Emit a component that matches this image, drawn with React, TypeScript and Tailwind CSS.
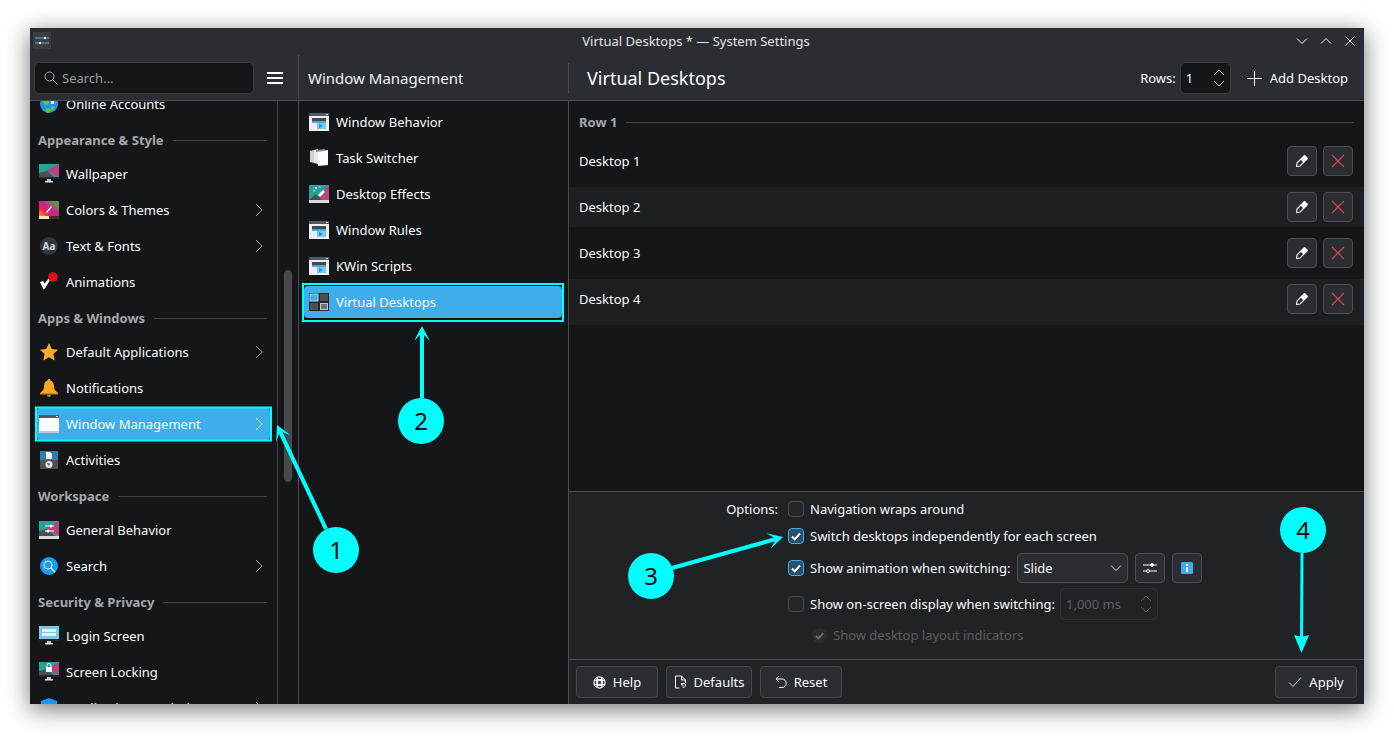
import React from "react";

const T = ({ children, className = "" }: { children: React.ReactNode; className?: string }) => (
  <span className={`whitespace-nowrap pt-[2px] ${className}`}>{children}</span>
);

const Chev = ({ c = "#9a9da0" }: { c?: string }) => (
  <svg width="10" height="14" viewBox="0 0 10 14" fill="none" stroke={c} strokeWidth="1"><path d="M2 1l6 6-6 6" /></svg>
);

const WinIcon = () => (
  <svg width="20" height="18" viewBox="0 0 20 18">
    <rect width="20" height="18" fill="#eff0f1" />
    <rect width="20" height="3" fill="#4d5a68" />
    <rect x="17" y="1" width="2" height="1" fill="#eff0f1" />
    <rect x="3" y="5" width="14" height="3" fill="#3f4a56" />
    <rect x="3" y="8" width="14" height="2" fill="#3daee9" />
    <rect x="8" y="10" width="9" height="6" fill="#7fc8ee" />
    <path d="M10 11l4 2-4 2z" fill="#1d8fd0" />
  </svg>
);
const TaskIcon = () => (
  <svg width="20" height="20" viewBox="0 0 20 20">
    <path d="M1 3l4-1v13l-4-1z" fill="#cfd2d4" />
    <path d="M5 2l4-1v15l-4-1z" fill="#e6e8e9" />
    <path d="M9 3l10-1v15l-10 1z" fill="#fcfcfc" />
    <path d="M7 2l9-1v2l-9 1z" fill="#8d9296" />
  </svg>
);
const EffectsIcon = () => (
  <svg width="20" height="18" viewBox="0 0 20 18">
    <rect width="20" height="16" fill="#2aa198" />
    <path d="M20 0v15H6z" fill="#b8437f" />
    <path d="M0 15l7-6 6 6z" fill="#4a5056" />
    <rect y="15" width="20" height="3" fill="#d9dcde" />
    <path d="M9 10l5-5 2 2-5 5z" fill="#fcfcfc" />
    <circle cx="7" cy="3" r="1" fill="#fcfcfc" /><circle cx="11" cy="2" r=".7" fill="#fcfcfc" /><circle cx="5" cy="6" r=".7" fill="#fcfcfc" />
  </svg>
);
const VDIcon = () => (
  <svg width="20" height="18" viewBox="0 0 20 18">
    <rect width="20" height="18" fill="#232629" />
    <rect x="1" y="1" width="8" height="7" fill="#3daee9" stroke="#a9d8f2" />
    <rect x="11" y="1" width="8" height="7" fill="#4d5054" />
    <rect x="1" y="10" width="8" height="7" fill="#4d5054" />
    <rect x="11.500" y="10.500" width="7" height="6" fill="#6d7175" stroke="#c4c7c9" />
  </svg>
);
const Monitor = ({ children }: { children?: React.ReactNode }) => (
  <svg width="20" height="20" viewBox="0 0 20 20">
    <rect width="20" height="15" fill="#232629" />
    <rect x="0" y="0" width="20" height="13" fill="#2aa198" />
    <path d="M20 0v13L7 7z" fill="#b8437f" />
    <path d="M0 13l0-4 8-2 7 6z" fill="#4a5056" />
    <rect x="8" y="15" width="4" height="2" fill="#bfc2c4" />
    <rect x="6" y="17" width="8" height="1.500" fill="#e0e2e3" />
    {children}
  </svg>
);
const ColorsIcon = () => (
  <svg width="20" height="18" viewBox="0 0 20 18">
    <defs>
      <linearGradient id="cg" x1="0" y1="1" x2="1" y2="0">
        <stop offset="0" stopColor="#f59e0b" /><stop offset=".3" stopColor="#e8205a" /><stop offset=".55" stopColor="#c026a0" /><stop offset=".8" stopColor="#7a8f2a" /><stop offset="1" stopColor="#1e8fd0" />
      </linearGradient>
    </defs>
    <rect width="20" height="15" fill="url(#cg)" />
    <rect y="15" width="10" height="3" fill="#fbe3c0" />
    <rect x="10" y="15" width="10" height="3" fill="#3a3426" />
    <path d="M7 11l5-6 1 1-5 6z" fill="#fcfcfc" />
  </svg>
);
const AaIcon = () => (
  <span className="flex h-[18px] w-[18px] items-center justify-center rounded-full bg-[#34373a] text-[10px] font-bold text-[#d5d7d9]">Aa</span>
);
const AnimIcon = () => (
  <svg width="20" height="20" viewBox="0 0 20 20">
    <path d="M1 10l3-1 1.500 2.500 5-6 1.500 1-6 10-1.500 1z" fill="#fcfcfc" />
    <circle cx="14" cy="5" r="4.800" fill="#e0101c" />
  </svg>
);
const StarIcon = () => (
  <svg width="20" height="20" viewBox="0 0 20 20"><path d="M10 1l2.800 6 6.200.700-4.600 4.300 1.300 6.500L10 15.200 4.300 18.500l1.300-6.500L1 7.700 7.200 7z" fill="#fbab2e" /></svg>
);
const BellIcon = () => (
  <svg width="20" height="20" viewBox="0 0 20 20">
    <path d="M10 1c1 0 1.500.700 1.500 1.500C14.500 3.500 15 6 15 9c0 3 2 4.500 4 6H1c2-1.500 4-3 4-6 0-3 .500-5.500 3.500-6.500C8.500 1.700 9 1 10 1z" fill="#f9a825" />
    <rect x="1" y="15" width="18" height="1.500" fill="#d97f14" />
    <path d="M8 17h4a2 2 0 0 1-4 0z" fill="#8d9296" />
  </svg>
);
const ActivitiesIcon = () => (
  <svg width="18" height="18" viewBox="0 0 18 18">
    <rect width="18" height="9" fill="#2c7fb0" />
    <rect y="9" width="18" height="9" fill="#4d5054" />
    <path d="M6 1h4l2 2v5H6z" fill="#fcfcfc" />
    <circle cx="9" cy="13.500" r="3.500" fill="#e4e6e7" />
    <path d="M7 12l3 .500-1 2.500z" fill="#4d5054" />
  </svg>
);
const GeneralIcon = () => (
  <svg width="20" height="18" viewBox="0 0 20 18">
    <rect width="20" height="15" fill="#2aa198" />
    <path d="M20 0v15L6 7z" fill="#b8437f" />
    <path d="M0 15V10l8-2 8 7z" fill="#4a5056" />
    <rect y="15" width="20" height="3" fill="#d9dcde" />
    <path d="M6 5h9M6 10h9" stroke="#fcfcfc" />
    <circle cx="12" cy="5" r="1.500" fill="#fcfcfc" /><circle cx="9" cy="10" r="1.500" fill="#fcfcfc" />
  </svg>
);
const SearchIcon = () => (
  <svg width="18" height="18" viewBox="0 0 18 18" fill="none">
    <circle cx="9" cy="9" r="9" fill="#1a9bf0" />
    <circle cx="8" cy="8" r="4" stroke="#e8f5fe" />
    <path d="M11 11l4 4" stroke="#e8f5fe" strokeWidth="1.300" />
  </svg>
);
const LoginIcon = () => (
  <svg width="20" height="20" viewBox="0 0 20 20">
    <rect width="20" height="15" fill="#232629" />
    <rect y="0" width="20" height="13" fill="#7fc4ea" />
    <rect x="3" y="3" width="14" height="3" fill="#e6eef3" />
    <rect x="3" y="7" width="14" height="3" fill="#e6eef3" />
    <rect x="8" y="15" width="4" height="2" fill="#bfc2c4" />
    <rect x="6" y="17" width="8" height="1.500" fill="#e0e2e3" />
  </svg>
);
const Globe = () => (
  <svg width="18" height="18" viewBox="0 0 18 18">
    <circle cx="9" cy="9" r="9" fill="#2196e0" />
    <path d="M3 7c2-2 4-2 6-1 1 2-1 4-3 4-1 0-2-1-3-3zM11 12c2-1 3-1 4 0-1 2-2 3-4 4zM5 14c2-1 4-1 6 1-1 2-3 3-4 3z" fill="#6cc04a" />
    <path d="M11 6h3v3h-3z" fill="#e8f5fe" />
  </svg>
);
const Shield = () => (
  <svg width="18" height="20" viewBox="0 0 18 20"><path d="M9 0l8 3v6c0 5-4 9-8 11-4-2-8-6-8-11V3z" fill="#1a9bf0" /></svg>
);

const Item = ({ icon, label, chev }: { icon: React.ReactNode; label: string; chev?: boolean }) => (
  <div className="flex h-[36px] items-center pr-[13px] pl-[9px]">
    <span className="flex w-[20px] shrink-0 items-center justify-center">{icon}</span>
    <T className="ml-[7px] flex-1">{label}</T>
    {chev && <Chev />}
  </div>
);
const Section = ({ label }: { label: string }) => (
  <div className="flex h-[34px] items-center gap-[9px] pt-[2px] pr-[10px] pl-[8px]">
    <T className="font-bold text-[#a5a8ab]">{label}</T>
    <span className="h-px flex-1 bg-[#3f4245]" />
  </div>
);
const Mid = ({ icon, label, active }: { icon: React.ReactNode; label: string; active?: boolean }) => (
  <div className={active ? "-mx-[5px] my-[2px] flex h-[32px] items-center rounded-[4px] bg-[#3daee9] pl-[5px]" : "flex h-[36px] items-center"}>
    <span className="flex w-[20px] shrink-0 items-center justify-center">{icon}</span>
    <T className="ml-[7px]">{label}</T>
  </div>
);

const IconBtn = ({ children, w = "w-[30px]" }: { children: React.ReactNode; w?: string }) => (
  <div className={`flex h-[30px] ${w} items-center justify-center rounded-[4px] border border-[#4a4d51] bg-[#2a2d31]`}>{children}</div>
);

const Pencil = () => (
  <svg width="14" height="14" viewBox="0 0 14 14">
    <path d="M9.500 1.500l3 3-7.500 7.500-3.500.500.500-3.500z" fill="#2a2d31" stroke="#fcfcfc" strokeWidth="1.100" strokeLinejoin="round" />
    <path d="M9.500 1.500l3 3-4 4-3-3z" fill="#fcfcfc" />
  </svg>
);
const RedX = () => (
  <svg width="14" height="14" viewBox="0 0 14 14" fill="none" stroke="#da4453" strokeWidth="1.200"><path d="M1 1l12 12M13 1L1 13" /></svg>
);

const DesktopRow = ({ name, band }: { name: string; band?: "short" | "full" }) => (
  <div className={`h-[46px] ${band === "full" ? "bg-[#1c1f22]" : ""}`}>
    <div className={`flex h-[40px] items-center pr-[11px] pl-[10px] ${band === "short" ? "bg-[#1c1f22]" : ""}`}>
      <T className="flex-1">{name}</T>
      <div className="flex gap-[6px]">
        <IconBtn><Pencil /></IconBtn>
        <IconBtn><RedX /></IconBtn>
      </div>
    </div>
  </div>
);

const Check = ({ on }: { on?: boolean }) => (
  <span className={`flex h-[16px] w-[16px] shrink-0 items-center justify-center rounded-[4px] border ${on ? "border-[#3daee9] bg-[#2b5068]" : "border-[#4a4d51] bg-[#232629]"}`}>
    {on && (
      <svg width="12" height="12" viewBox="0 0 12 12" fill="none" stroke="#fcfcfc" strokeWidth="2"><path d="M2 6.500l2.800 2.800L10 3.500" /></svg>
    )}
  </span>
);

const Spin = ({ c = "#c8cacc" }: { c?: string }) => (
  <svg width="12" height="18" viewBox="0 0 12 18" fill="none" stroke={c} strokeWidth="1"><path d="M1 6l5-5 5 5M1 12l5 5 5-5" /></svg>
);

const FootBtn = ({ icon, label, w }: { icon: React.ReactNode; label: string; w: string }) => (
  <div className={`flex h-[32px] ${w} items-center justify-center gap-[7px] rounded-[4px] border border-[#45484c] bg-[#2a2d31]`}>
    {icon}
    <T>{label}</T>
  </div>
);

const Arrow = ({ x1, y1, x2, y2, sw = 4, L = 15, W = 8, N = 7 }: { x1: number; y1: number; x2: number; y2: number; sw?: number; L?: number; W?: number; N?: number }) => {
  const a = Math.atan2(y2 - y1, x2 - x1);
  const ux = Math.cos(a), uy = Math.sin(a), px = -uy, py = ux;
  const b = [x2 - ux * L, y2 - uy * L];
  const n = [x2 - ux * N, y2 - uy * N];
  const pts = [[x2, y2], [b[0] + px * W, b[1] + py * W], n, [b[0] - px * W, b[1] - py * W]].map((p) => p.join(",")).join(" ");
  return (
    <g>
      <line x1={x1} y1={y1} x2={n[0]} y2={n[1]} stroke="#00ffff" strokeWidth={sw} />
      <polygon points={pts} fill="#00ffff" />
    </g>
  );
};
const Badge = ({ x, y, n }: { x: number; y: number; n: string }) => (
  <g>
    <circle cx={x} cy={y} r="23" fill="#00ffff" />
    <text x={x} y={y + 9} textAnchor="middle" fontSize="24" fill="#0a0a0a" fontFamily="'Noto Sans', sans-serif">{n}</text>
  </g>
);

export default function App() {
  return (
    <div className="relative h-[736px] w-[1394px] overflow-hidden bg-white pt-[28px] pl-[30px] font-['Noto_Sans',sans-serif] text-[13px] text-[#fcfcfc]">
      <div className="flex h-[676px] w-[1334px] flex-col overflow-hidden bg-[#141618] shadow-[0_5px_22px_rgba(0,0,0,0.55)]">
        {/* Title bar */}
        <div className="relative flex h-[27px] shrink-0 items-center justify-center bg-[#2a2e32]">
          <div className="absolute top-[4px] left-[3px] flex h-[17px] w-[18px] flex-col justify-center gap-[2px] bg-[#3a3e42] px-[2px]">
            <svg width="14" height="10" viewBox="0 0 14 10" fill="none"><path d="M0 2h14" stroke="#3daee9" /><path d="M0 7h14" stroke="#8fa3b0" /><circle cx="10" cy="2" r="1.200" fill="#fcfcfc" /><circle cx="5" cy="7" r="1.200" fill="#fcfcfc" /></svg>
          </div>
          <span className="-ml-[2px] text-[#e4e5e6]">Virtual Desktops * — System Settings</span>
          <div className="absolute top-[7px] right-[8px] flex gap-[12px]">
            <svg width="12" height="12" viewBox="0 0 12 12" fill="none" stroke="#fcfcfc"><path d="M1 3.500l5 5 5-5" /></svg>
            <svg width="12" height="12" viewBox="0 0 12 12" fill="none" stroke="#fcfcfc"><path d="M1 8.500l5-5 5 5" /></svg>
            <svg width="12" height="12" viewBox="0 0 12 12" fill="none" stroke="#fcfcfc"><path d="M1.500 1.500l9 9M10.500 1.500l-9 9" /></svg>
          </div>
        </div>
        {/* Header */}
        <div className="flex h-[46px] shrink-0 border-b border-[#4a4d51] bg-[#2a2e32]">
          <div className="flex w-[269px] shrink-0 items-center border-r border-[#4a4d51] pt-[1px] pl-[4px]">
            <div className="flex h-[32px] w-[220px] items-center gap-[4px] rounded-[5px] border border-[#3a3d41] bg-[#141618] pl-[9px] text-[#9a9da0]">
              <svg width="14" height="14" viewBox="0 0 14 14" fill="none" stroke="#a4a7aa"><circle cx="5.500" cy="5.500" r="4.500" /><path d="M9 9l4.500 4.500" /></svg>
              <T>Search...</T>
            </div>
            <svg className="ml-[13px]" width="16" height="12" viewBox="0 0 16 12" fill="#fcfcfc"><rect width="16" height="2" /><rect y="5" width="16" height="2" /><rect y="10" width="16" height="2" /></svg>
          </div>
          <div className="flex w-[270px] shrink-0 items-center pt-[1px] pl-[9px] text-[15px] text-[#f0f1f2]">
            <span className="flex-1">Window Management</span>
            <span className="h-[30px] w-px bg-[#4a4d51]" />
          </div>
          <div className="flex flex-1 items-center pt-[1px] pr-[16px] pl-[18px]">
            <span className="flex-1 text-[18px]">Virtual Desktops</span>
            <T>Rows:</T>
            <div className="mr-[16px] ml-[4px] flex h-[32px] w-[51px] items-center justify-between rounded-[5px] border border-[#3a3d41] bg-[#141618] pr-[5px] pl-[5px]">
              <T>1</T>
              <Spin />
            </div>
            <svg width="15" height="15" viewBox="0 0 15 15" stroke="#fcfcfc"><path d="M7.500 0v15M0 7.500h15" /></svg>
            <T className="ml-[8px]">Add Desktop</T>
          </div>
        </div>
        {/* Body */}
        <div className="flex min-h-0 flex-1">
          {/* Sidebar */}
          <div className="flex w-[269px] shrink-0 border-r border-[#4a4d51]">
            <div className="w-[248px] shrink-0 overflow-hidden border-r border-[#3f4245]">
              <div className="-mt-[15px]">
                <Item icon={<Globe />} label="Online Accounts" />
                <Section label="Appearance & Style" />
                <Item icon={<Monitor />} label="Wallpaper" />
                <Item icon={<ColorsIcon />} label="Colors & Themes" chev />
                <Item icon={<AaIcon />} label="Text & Fonts" chev />
                <Item icon={<AnimIcon />} label="Animations" />
                <Section label="Apps & Windows" />
                <Item icon={<StarIcon />} label="Default Applications" chev />
                <Item icon={<BellIcon />} label="Notifications" />
                <div className="py-[2px]">
                  <div className="mx-[7px] flex h-[32px] items-center rounded-[3px] bg-[#3daee9] pr-[6px] pl-[2px]">
                    <svg width="20" height="18" viewBox="0 0 20 18"><rect width="20" height="18" fill="#fcfcfc" /><rect width="20" height="3" fill="#4d5a68" /><rect x="17" y="1" width="2" height="1" fill="#fcfcfc" /><rect y="16" width="20" height="2" fill="#c8cbcd" /></svg>
                    <T className="ml-[7px] flex-1">Window Management</T>
                    <Chev c="#d8eefa" />
                  </div>
                </div>
                <Item icon={<ActivitiesIcon />} label="Activities" />
                <Section label="Workspace" />
                <Item icon={<GeneralIcon />} label="General Behavior" />
                <Item icon={<SearchIcon />} label="Search" chev />
                <Section label="Security & Privacy" />
                <Item icon={<LoginIcon />} label="Login Screen" />
                <Item
                  icon={
                    <Monitor>
                      <rect x="7" y="5" width="6" height="5" fill="#fcfcfc" />
                      <path d="M8 5V3.500a2 2 0 0 1 4 0V5" fill="none" stroke="#fcfcfc" />
                    </Monitor>
                  }
                  label="Screen Locking"
                />
                <Item icon={<Shield />} label="Application Permissions" chev />
              </div>
            </div>
            <div className="flex-1 pt-[169px] pl-[6px]">
              <div className="h-[212px] w-[8px] rounded-full border border-[#4e5154] bg-[#47494c]" />
            </div>
          </div>
          {/* Middle */}
          <div className="w-[270px] shrink-0 border-r border-[#4a4d51] pt-[3px] pl-[10px]">
            <div className="w-[248px]">
              <Mid icon={<WinIcon />} label="Window Behavior" />
              <Mid icon={<TaskIcon />} label="Task Switcher" />
              <Mid icon={<EffectsIcon />} label="Desktop Effects" />
              <Mid icon={<WinIcon />} label="Window Rules" />
              <Mid icon={<WinIcon />} label="KWin Scripts" />
              <Mid icon={<VDIcon />} label="Virtual Desktops" active />
            </div>
          </div>
          {/* Right */}
          <div className="flex min-w-0 flex-1 flex-col">
            <div className="flex-1">
              <div className="flex h-[40px] items-center gap-[9px] pt-[2px] pr-[10px] pl-[10px]">
                <T className="font-bold text-[#a5a8ab]">Row 1</T>
                <span className="h-px flex-1 bg-[#3f4245]" />
              </div>
              <DesktopRow name="Desktop 1" />
              <DesktopRow name="Desktop 2" band="short" />
              <DesktopRow name="Desktop 3" />
              <DesktopRow name="Desktop 4" band="full" />
            </div>
            <div className="flex h-[168px] shrink-0 border-t border-[#4a4d51] bg-[#202326] pt-[4px]">
              <div className="w-[209px] shrink-0 pt-[4px] text-right">Options:</div>
              <div className="ml-[10px]">
                <div className="flex h-[26px] items-center gap-[6px]"><Check /><T>Navigation wraps around</T></div>
                <div className="mt-[1px] flex h-[26px] items-center gap-[6px]"><Check on /><T>Switch desktops independently for each screen</T></div>
                <div className="mt-[3px] flex h-[32px] items-center gap-[6px]">
                  <Check on /><T>Show animation when switching:</T>
                  <div className="ml-[1px] flex h-[30px] w-[111px] items-center justify-between rounded-[5px] border border-[#4a4d51] bg-[#2a2d31] pr-[5px] pl-[5px]">
                    <T>Slide</T>
                    <svg width="12" height="12" viewBox="0 0 12 12" fill="none" stroke="#e4e5e6"><path d="M1 3.500l5 5 5-5" /></svg>
                  </div>
                  <div className="ml-[1px] flex gap-[7px]">
                    <IconBtn>
                      <svg width="14" height="12" viewBox="0 0 14 12" fill="none" stroke="#fcfcfc"><path d="M0 3h14M0 9h14" /><circle cx="9" cy="3" r="1.500" fill="#fcfcfc" /><circle cx="5" cy="9" r="1.500" fill="#2a2d31" /></svg>
                    </IconBtn>
                    <IconBtn>
                      <svg width="12" height="12" viewBox="0 0 12 12"><rect width="12" height="12" rx="1.500" fill="#3daee9" /><rect x="5" y="2" width="2" height="2" fill="#fcfcfc" /><rect x="5" y="5" width="2" height="5" fill="#fcfcfc" /></svg>
                    </IconBtn>
                  </div>
                </div>
                <div className="mt-[4px] flex h-[32px] items-center gap-[6px]">
                  <Check /><T>Show on-screen display when switching:</T>
                  <div className="-ml-[1px] flex h-[32px] w-[98px] items-center justify-between rounded-[5px] border border-[#2f3236] pr-[5px] pl-[5px] text-[#5b5e61]">
                    <T>1,000 ms</T>
                    <Spin c="#5b5e61" />
                  </div>
                </div>
                <div className="mt-[2px] flex h-[26px] items-center gap-[6px] pl-[24px] text-[#5b5e61]">
                  <span className="flex h-[15px] w-[15px] items-center justify-center rounded-full bg-[#2a2d30]">
                    <svg width="11" height="11" viewBox="0 0 12 12" fill="none" stroke="#6d7073" strokeWidth="2"><path d="M2 6.500l2.800 2.800L10 3.500" /></svg>
                  </span>
                  <T>Show desktop layout indicators</T>
                </div>
              </div>
            </div>
            <div className="flex h-[45px] shrink-0 items-center border-t border-[#4a4d51] bg-[#202326] pr-[7px] pl-[7px]">
              <div className="flex flex-1 gap-[8px]">
                <FootBtn
                  w="w-[82px]"
                  label="Help"
                  icon={<svg width="13" height="13" viewBox="0 0 14 14" fill="none" stroke="#fcfcfc"><circle cx="7" cy="7" r="6" strokeWidth="1.300" /><rect x="4" y="4" width="6" height="6" strokeWidth="1.300" /><path d="M2 5h10M2 9h10M5 2v10M9 2v10" strokeWidth="1" /></svg>}
                />
                <FootBtn
                  w="w-[86px]"
                  label="Defaults"
                  icon={<svg width="13" height="14" viewBox="0 0 12 14" fill="none" stroke="#fcfcfc"><path d="M5 13H1V1h6l4 4v3" /><path d="M7 1v4h4" /><path d="M7 10a2 2 0 1 1 1 2M7 8v2h2" /></svg>}
                />
                <FootBtn
                  w="w-[82px]"
                  label="Reset"
                  icon={<svg width="12" height="14" viewBox="0 0 12 14" fill="none" stroke="#fcfcfc"><path d="M1 4h6a4 4 0 0 1 0 8.500H4M4 1L1 4l3 3" /></svg>}
                />
              </div>
              <FootBtn
                w="w-[82px]"
                label="Apply"
                icon={<svg width="14" height="12" viewBox="0 0 14 12" fill="none" stroke="#d8dadc"><path d="M1 6.500l4 4 8-9" /></svg>}
              />
            </div>
          </div>
        </div>
      </div>
      {/* Annotations */}
      <svg className="pointer-events-none absolute top-0 left-0" width="1394" height="736" viewBox="0 0 1394 736" fill="none">
        <rect x="36" y="407.500" width="235" height="33" stroke="#00ffff" strokeWidth="2" />
        <rect x="303" y="284" width="260" height="37" stroke="#00ffff" strokeWidth="2" />
        <Arrow x1={326} y1={529} x2={277} y2={425} />
        <Arrow x1={422} y1={398} x2={422} y2={326} />
        <Arrow x1={672} y1={568} x2={783} y2={537} />
        <Arrow x1={1302} y1={552} x2={1301.500} y2={653} sw={3} L={18} W={7.500} N={16} />
        <Badge x={336} y={550} n="1" />
        <Badge x={421} y={421} n="2" />
        <Badge x={651} y={576} n="3" />
        <Badge x={1303} y={530} n="4" />
      </svg>
    </div>
  );
}
